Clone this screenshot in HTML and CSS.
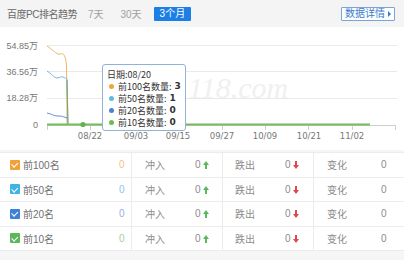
FILE: index.html
```html
<!DOCTYPE html>
<html>
<head>
<meta charset="utf-8">
<link rel="stylesheet" href="styles.css">
</head>
<body>
<div class="head">
  <span class="title">百度PC排名趋势</span>
  <span class="tab t7">7天</span>
  <span class="tab t30">30天</span>
  <span class="tab active">3个月</span>
  <span class="more">数据详情<i class="tri"></i></span>
</div>
<div class="chart">
  <svg class="plot" width="404" height="123" viewBox="0 27 404 123">
    <g stroke="#e9e9e9" stroke-width="1">
      <line x1="47" y1="45.5" x2="397" y2="45.5"/>
      <line x1="47" y1="71.5" x2="397" y2="71.5"/>
      <line x1="47" y1="98.5" x2="397" y2="98.5"/>
    </g>
    <g font-family="Liberation Sans, Noto Sans CJK SC, sans-serif" font-size="9" fill="#777" text-anchor="end">
      <text x="38" y="49">54.85万</text>
      <text x="38" y="75">36.56万</text>
      <text x="38" y="101">18.28万</text>
      <text x="38" y="128">0</text>
    </g>
    <text x="188" y="98" font-family="Liberation Serif, serif" font-style="italic" font-size="30" fill="#f0f0f0">118.com</text>
    <g stroke="#cfcfcf" stroke-width="1">
      <line x1="47" y1="125.5" x2="396" y2="125.5"/>
      <line x1="47.5" y1="125" x2="47.5" y2="130"/>
      <line x1="90.5" y1="125" x2="90.5" y2="130"/>
      <line x1="135.5" y1="125" x2="135.5" y2="130"/>
      <line x1="178.5" y1="125" x2="178.5" y2="130"/>
      <line x1="222.5" y1="125" x2="222.5" y2="130"/>
      <line x1="265.5" y1="125" x2="265.5" y2="130"/>
      <line x1="308.5" y1="125" x2="308.5" y2="130"/>
      <line x1="352.5" y1="125" x2="352.5" y2="130"/>
      <line x1="395.5" y1="125" x2="395.5" y2="130"/>
    </g>
    <g font-family="DejaVu Sans, sans-serif" font-size="8.5" fill="#777" text-anchor="middle">
      <text x="90" y="139">08/22</text>
      <text x="136" y="139">09/03</text>
      <text x="178" y="139">09/15</text>
      <text x="222" y="139">09/27</text>
      <text x="265" y="139">10/09</text>
      <text x="309" y="139">10/21</text>
      <text x="352" y="139">11/02</text>
    </g>
    <path d="M47 46 C52 49 55 53 58 54 C61 55 62 52 64 55 C66 58 66 62 66.5 66 L67 125" fill="none" stroke="#f2b56a" stroke-width="1"/>
    <path d="M47 71 C52 74 54 78 57 78 C60 78 61 76 63 77 C65 78 66 78 67 79 L68 125" fill="none" stroke="#7fb3e6" stroke-width="1"/>
    <path d="M47 113 C52 114 54 116 57 116 C60 116 62 116 64 117 L68 118" fill="none" stroke="#6a8fdc" stroke-width="1"/>
    <path d="M67 80 L68 125" fill="none" stroke="#6fae6c" stroke-width="1"/>
    <path d="M47 124.5 L370 124.5" stroke="#74bd5a" stroke-width="2"/>
    <circle cx="83" cy="124.5" r="2.6" fill="#67b34e"/>
  </svg>
  <div class="tip">
    <div class="tip-row">日期:08/20</div>
    <div class="tip-row"><i class="dot d1"></i>前100名数量: <b>3</b></div>
    <div class="tip-row"><i class="dot d2"></i>前50名数量: <b>1</b></div>
    <div class="tip-row"><i class="dot d3"></i>前20名数量: <b>0</b></div>
    <div class="tip-row"><i class="dot d4"></i>前10名数量: <b>0</b></div>
  </div>
</div>
<div class="table">
  <div class="row">
    <div class="cell c1"><span class="name"><i class="cb k1"></i>前100名</span><span class="v1">0</span></div>
    <div class="cell c2"><span>冲入</span><span>0<i class="up"></i></span></div>
    <div class="cell c3"><span>跌出</span><span>0<i class="down"></i></span></div>
    <div class="cell c4"><span>变化</span><span>0</span></div>
  </div>
  <div class="row">
    <div class="cell c1"><span class="name"><i class="cb k2"></i>前50名</span><span class="v2">0</span></div>
    <div class="cell c2"><span>冲入</span><span>0<i class="up"></i></span></div>
    <div class="cell c3"><span>跌出</span><span>0<i class="down"></i></span></div>
    <div class="cell c4"><span>变化</span><span>0</span></div>
  </div>
  <div class="row">
    <div class="cell c1"><span class="name"><i class="cb k3"></i>前20名</span><span class="v3">0</span></div>
    <div class="cell c2"><span>冲入</span><span>0<i class="up"></i></span></div>
    <div class="cell c3"><span>跌出</span><span>0<i class="down"></i></span></div>
    <div class="cell c4"><span>变化</span><span>0</span></div>
  </div>
  <div class="row">
    <div class="cell c1"><span class="name"><i class="cb k4"></i>前10名</span><span class="v4">0</span></div>
    <div class="cell c2"><span>冲入</span><span>0<i class="up"></i></span></div>
    <div class="cell c3"><span>跌出</span><span>0<i class="down"></i></span></div>
    <div class="cell c4"><span>变化</span><span>0</span></div>
  </div>
</div>
</body>
</html>
```
FILE: styles.css
```css
* { box-sizing: border-box; }
html, body { margin: 0; padding: 0; }
body {
  width: 404px;
  height: 260px;
  overflow: hidden;
  background: #f6f6f6;
  font-family: "Liberation Sans", "Noto Sans CJK SC", sans-serif;
  font-size: 10px;
  color: #888;
}
.head {
  height: 27px;
  display: flex;
  align-items: center;
  padding-left: 7px;
  padding-right: 9px;
  background: #f4f4f4;
}
.title { color: #6a6a6a; font-size: 10px; letter-spacing: -0.5px; }
.tab { color: #a0a0a0; font-size: 10px; }
.t7 { margin-left: 11px; }
.t30 { margin-left: 17px; }
.active {
  margin-left: 12px;
  background: #1b7fe6;
  color: #fff;
  height: 14px;
  line-height: 14px;
  padding: 0 6px;
  border-radius: 1px;
}
.more {
  margin-left: auto;
  border: 1px solid #7aa3d8;
  background: #fbfdff;
  color: #3f7cc8;
  height: 14px;
  line-height: 12px;
  padding: 0 3px 0 3px;
  font-size: 10px;
  display: flex;
  align-items: center;
  border-radius: 1px;
}
.tri {
  width: 0; height: 0;
  border-left: 3px solid #3f7cc8;
  border-top: 3px solid transparent;
  border-bottom: 3px solid transparent;
  margin-left: 3px;
}
.chart {
  position: relative;
  height: 123px;
  background: #fff;
}
.plot { display: block; }
.tip {
  position: absolute;
  left: 102px;
  top: 37px;
  width: 84px;
  height: 67px;
  background: rgba(255,255,255,0.96);
  border: 1px solid #8fb2d9;
  border-radius: 3px;
  padding: 4px 0 0 4px;
  font-family: "Noto Sans CJK SC", sans-serif;
  font-size: 9px;
  color: #333;
  display: flex;
  flex-direction: column;
  gap: 1px;
}
.tip-row { display: flex; align-items: center; height: 11px; line-height: 11px; white-space: nowrap; }
.tip-row b { margin-left: 3px; font-weight: bold; font-family: "DejaVu Sans", sans-serif; font-size: 9px; }
.dot { width: 5px; height: 5px; border-radius: 50%; margin: 0 4px 0 2px; }
.d1 { background: #f0a43a; }
.d2 { background: #5bbbe0; }
.d3 { background: #4c82d4; }
.d4 { background: #6cbd4f; }
.table {
  margin-top: 2px;
  background: #fff;
  border-top: 1px solid #ececec;
}
.row {
  display: grid;
  grid-template-columns: 131px 91px 91px 91px;
  height: 24.5px;
  border-bottom: 1px solid #ececec;
}
.cell {
  display: grid;
  align-items: center;
  height: 100%;
  color: #8c8c8c;
}
.cell + .cell { border-left: 1px solid #ececec; }
.c1 { padding-left: 10px; grid-template-columns: 109px auto; }
.c2 { padding-left: 13px; grid-template-columns: 50px auto; }
.c3 { padding-left: 12px; grid-template-columns: 50px auto; }
.c4 { padding-left: 13px; grid-template-columns: 54px auto; }
.name { display: flex; align-items: center; color: #707070; }
.cb {
  width: 10px; height: 10px;
  border-radius: 1px;
  margin-right: 3px;
  position: relative;
}
.cb::after {
  content: "";
  position: absolute;
  left: 3px; top: 1.5px;
  width: 2.5px; height: 4.5px;
  border: solid #fff;
  border-width: 0 1.5px 1.5px 0;
  transform: rotate(45deg);
}
.k1 { background: #f0a23a; }
.k2 { background: #3fb3e6; }
.k3 { background: #3d82d6; }
.k4 { background: #5bb85a; }
.v1 { color: #f3c088; }
.v2 { color: #86c8ea; }
.v3 { color: #93b0e2; }
.v4 { color: #9fd09a; }
.up, .down {
  display: inline-block;
  position: relative;
  width: 6px; height: 8px;
  margin-left: 2px;
  vertical-align: -1px;
}
.up::before, .down::before {
  content: "";
  position: absolute;
  left: 0; width: 0; height: 0;
  border-left: 3px solid transparent;
  border-right: 3px solid transparent;
}
.up::after, .down::after {
  content: "";
  position: absolute;
  left: 2px; width: 2px; height: 4px;
}
.up::before { top: 0; border-bottom: 4px solid #5cb85c; }
.up::after { top: 4px; background: #5cb85c; }
.down::before { top: 4px; border-top: 4px solid #e0474c; }
.down::after { top: 0; background: #e0474c; }
```
